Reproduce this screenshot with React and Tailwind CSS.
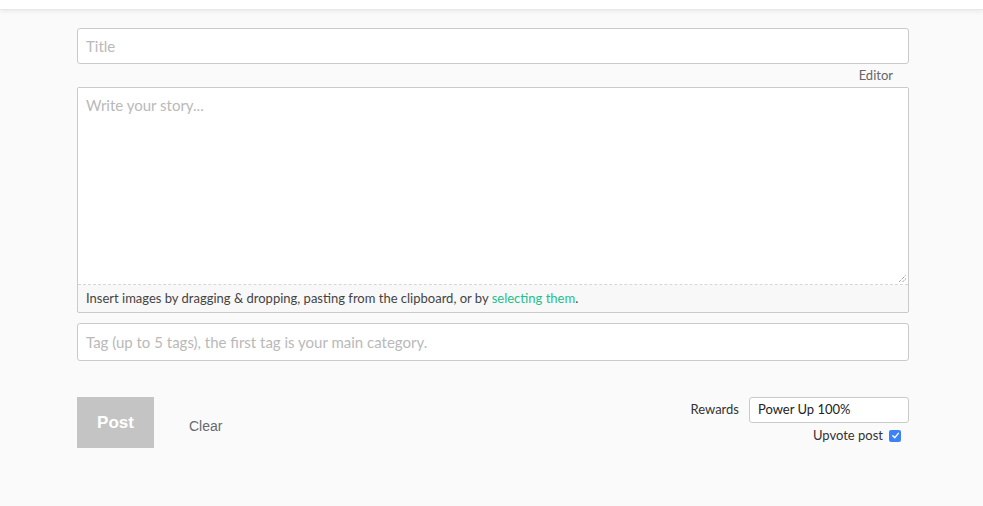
export default function App() {
  const ss = { fontFamily: '"Lato", "Open Sans", sans-serif' };
  return (
    <div className="w-[983px] h-[506px] bg-[#fafafa] overflow-hidden" style={ss}>
      <div className="h-[10px] bg-white border-b border-[#e8e8e8] shadow-[0_2px_4px_rgba(0,0,0,0.06)]" />
      <div className="ml-[77px] w-[832px] pt-[18px]">
        <div className="h-[36px] bg-white border border-[#cacaca] rounded-[3px] flex items-center px-[8px] text-[15px] text-[#b9b9b9]">
          Title
        </div>
        <div className="h-[23px] flex items-center justify-end pr-[16px] text-[13px] text-[#666]">Editor</div>
        <div className="border border-[#cacaca] rounded-[2px] bg-[#f8f8f8]">
          <div className="h-[197px] bg-white border-b border-dashed border-[#d6d6d6] relative px-[8px] pt-[6px] text-[15px] text-[#b9b9b9]">
            Write your story...
            <svg className="absolute right-[1px] bottom-[1px]" width="9" height="9" viewBox="0 0 9 9">
              <path d="M1 8 L8 1 M4.5 8 L8 4.5" stroke="#777" strokeWidth="1" strokeDasharray="1 1" />
            </svg>
          </div>
          <div className="h-[27px] flex items-center px-[8px] text-[13px] text-[#444]">
            Insert images by dragging &amp; dropping, pasting from the clipboard, or by&nbsp;
            <span className="text-[#1fbf8f]">selecting them</span>.
          </div>
        </div>
        <div className="mt-[10px] h-[38px] bg-white border border-[#cacaca] rounded-[3px] flex items-center px-[8px] text-[15px] text-[#b9b9b9]">
          Tag (up to 5 tags), the first tag is your main category.
        </div>
        <div className="mt-[36px] flex justify-between">
          <div className="flex items-center h-[51px]">
            <div className="w-[77px] h-[51px] bg-[#c4c4c5] text-white font-bold text-[17px] flex items-center justify-center" style={{ fontFamily: '"Liberation Sans", Arial, sans-serif' }}>
              Post
            </div>
            <div className="ml-[35px] mt-[8px] text-[14px] text-[#666a70]" style={{ fontFamily: '"Liberation Sans", Arial, sans-serif' }}>
              Clear
            </div>
          </div>
          <div className="flex flex-col items-end">
            <div className="flex items-center">
              <span className="text-[13px] text-[#333] mr-[10px]">Rewards</span>
              <div className="w-[160px] h-[26px] bg-white border border-[#cacaca] rounded-[3px] flex items-center px-[8px] text-[13px] text-[#222]">
                Power Up 100%
              </div>
            </div>
            <div className="flex items-center mt-[3px] mr-[8px]">
              <span className="text-[13px] text-[#333] mr-[6px]">Upvote post</span>
              <span className="w-[12px] h-[12px] rounded-[2px] bg-[#3b82f6] flex items-center justify-center">
                <svg width="9" height="9" viewBox="0 0 10 10">
                  <path d="M2 5.2 L4.2 7.4 L8.2 2.6" stroke="white" strokeWidth="1.6" fill="none" strokeLinecap="round" strokeLinejoin="round" />
                </svg>
              </span>
            </div>
          </div>
        </div>
      </div>
    </div>
  );
}
